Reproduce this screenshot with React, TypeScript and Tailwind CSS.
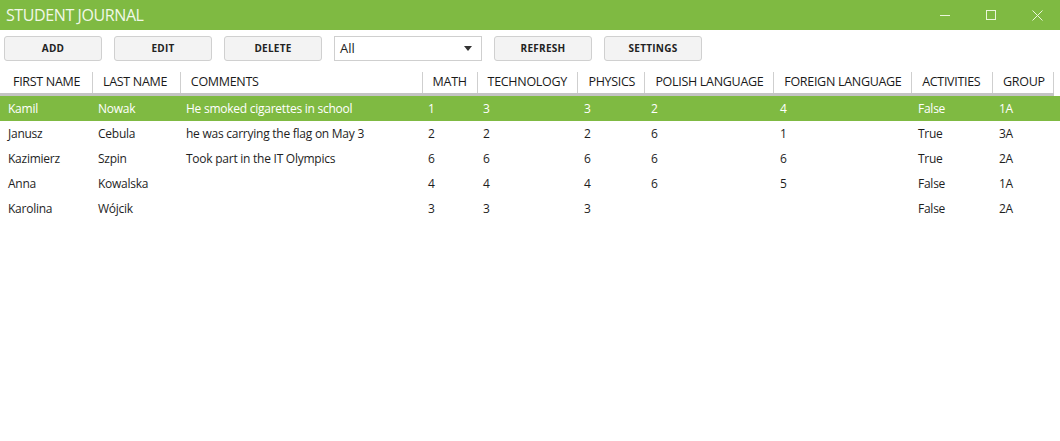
import { useState } from "react";

const green = "bg-[#7fba42]";

const columns = [
  { key: "first", label: "FIRST NAME", w: "w-[93px]" },
  { key: "last", label: "LAST NAME", w: "w-[88px]" },
  { key: "comments", label: "COMMENTS", w: "w-[242px]" },
  { key: "math", label: "MATH", w: "w-[55px]" },
  { key: "tech", label: "TECHNOLOGY", w: "w-[101px]" },
  { key: "physics", label: "PHYSICS", w: "w-[67px]" },
  { key: "polish", label: "POLISH LANGUAGE", w: "w-[129px]" },
  { key: "foreign", label: "FOREIGN LANGUAGE", w: "w-[138px]" },
  { key: "activities", label: "ACTIVITIES", w: "w-[81px]" },
  { key: "group", label: "GROUP", w: "w-[61px]" },
];

const students = [
  ["Kamil", "Nowak", "He smoked cigarettes in school", "1", "3", "3", "2", "4", "False", "1A"],
  ["Janusz", "Cebula", "he was carrying the flag on May 3", "2", "2", "2", "6", "1", "True", "3A"],
  ["Kazimierz", "Szpin", "Took part in the IT Olympics", "6", "6", "6", "6", "6", "True", "2A"],
  ["Anna", "Kowalska", "", "4", "4", "4", "6", "5", "False", "1A"],
  ["Karolina", "Wójcik", "", "3", "3", "3", "", "", "False", "2A"],
];

function ToolButton({ label }: { label: string }) {
  return (
    <button className="w-[98px] h-[25px] rounded-[3px] border border-[#d0d0d0] bg-[#f3f3f3] text-[10px] font-bold text-[#222] tracking-wide">
      {label}
    </button>
  );
}

export default function App() {
  const [selected, setSelected] = useState(0);

  return (
    <div
      className="w-[1060px] h-[441px] bg-white overflow-hidden"
      style={{ fontFamily: '"Segoe UI", "Open Sans", sans-serif' }}
    >
      {/* title bar */}
      <div className={`h-[30px] ${green} flex items-center justify-between`}>
        <span className="pl-[6px] text-[16px] text-[#f1f8e8] tracking-[-0.4px]">STUDENT JOURNAL</span>
        <div className="flex h-full">
          <div className="w-[46px] h-full flex items-center justify-center">
            <svg width="10" height="10" viewBox="0 0 10 10">
              <path d="M0 5.5 H10" stroke="#eaf6da" strokeWidth="1" />
            </svg>
          </div>
          <div className="w-[46px] h-full flex items-center justify-center">
            <svg width="10" height="10" viewBox="0 0 10 10">
              <rect x="0.5" y="0.5" width="9" height="9" fill="none" stroke="#eaf6da" strokeWidth="1" />
            </svg>
          </div>
          <div className="w-[46px] h-full flex items-center justify-center">
            <svg width="11" height="11" viewBox="0 0 11 11">
              <path d="M0.5 0.5 L10.5 10.5 M10.5 0.5 L0.5 10.5" stroke="#eaf6da" strokeWidth="1" />
            </svg>
          </div>
        </div>
      </div>

      {/* toolbar */}
      <div className="flex gap-[12px] px-[4px] pt-[6px]">
        <ToolButton label="ADD" />
        <ToolButton label="EDIT" />
        <ToolButton label="DELETE" />
        <div className="w-[148px] h-[25px] border border-[#cfcfcf] bg-white flex items-center justify-between pl-[5px] pr-[9px]">
          <span className="text-[13px] text-[#222]">All</span>
          <svg width="8" height="5" viewBox="0 0 8 5">
            <path d="M0 0 H8 L4 5 Z" fill="#333" />
          </svg>
        </div>
        <ToolButton label="REFRESH" />
        <ToolButton label="SETTINGS" />
      </div>

      {/* grid */}
      <div className="mt-[11px]">
        <div className="flex w-[1054px] border-b-[3px] border-[#c4c4c4]">
          {columns.map((c, i) => (
            <div
              key={c.key}
              className={`${c.w} h-[21px] border-r border-[#cfcfcf] flex items-center text-[12.5px] font-medium tracking-[-0.3px] text-[#1a1a1a] whitespace-nowrap ${
                i === 0 ? "pl-[13px]" : "pl-[10px]"
              }`}
            >
              {c.label}
            </div>
          ))}
        </div>
        {students.map((row, r) => (
          <div
            key={r}
            onClick={() => setSelected(r)}
            className={`flex h-[25px] ${r === selected ? `${green} text-white` : "text-[#1e1e1e]"}`}
          >
            {row.map((v, i) => (
              <div
                key={i}
                className={`${columns[i].w} flex items-center text-[12px] tracking-[-0.25px] whitespace-nowrap ${
                  i === 0 ? "pl-[8px]" : "pl-[5px]"
                }`}
              >
                {v}
              </div>
            ))}
          </div>
        ))}
      </div>
    </div>
  );
}
